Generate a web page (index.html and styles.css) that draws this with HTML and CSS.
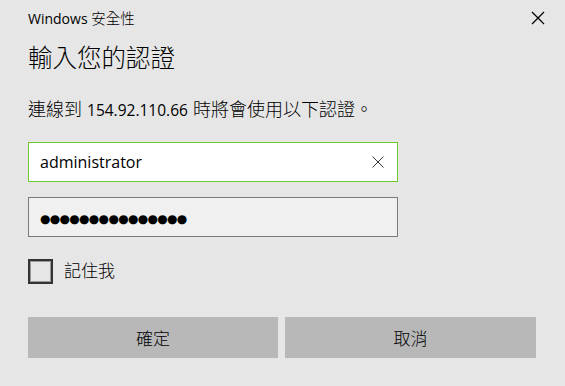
FILE: index.html
```html
<!DOCTYPE html>
<html lang="zh-Hant">
<head>
<meta charset="utf-8">
<link rel="stylesheet" href="styles.css">
</head>
<body>
<div class="dialog">
  <div class="titlebar">
    <span class="app">Windows <span class="cj-title">安全性</span></span>
    <span class="close"><svg width="14" height="14" viewBox="0 0 14 14"><path d="M1 1L13 13M13 1L1 13" stroke="#000" stroke-width="1.3" fill="none"/></svg></span>
  </div>
  <h1 class="heading">輸入您的認證</h1>
  <p class="desc"><span class="cj">連線到</span> 154.92.110.66 <span class="cj">時將會使用以下認證。</span></p>
  <div class="field field-active">
    <span class="value">administrator</span>
    <span class="clear"><svg width="12" height="12" viewBox="0 0 12 12"><path d="M0.5 0.5L11.5 11.5M11.5 0.5L0.5 11.5" stroke="#333" stroke-width="1" fill="none"/></svg></span>
  </div>
  <div class="field field-pass">
    <span class="dots">●●●●●●●●●●●●●●●</span>
  </div>
  <label class="remember">
    <span class="box"></span>
    <span class="rlabel">記住我</span>
  </label>
  <div class="buttons">
    <div class="btn btn-ok">確定</div>
    <div class="btn">取消</div>
  </div>
</div>
</body>
</html>
```
FILE: styles.css
```css
html, body {
  margin: 0;
  padding: 0;
  background: #e6e6e6;
}
body {
  font-family: "Open Sans", "Noto Sans CJK TC", sans-serif;
  color: #000;
  width: 565px;
  height: 386px;
  overflow: hidden;
}
.dialog {
  padding: 0 29px 0 28px;
}
.titlebar {
  display: flex;
  justify-content: space-between;
  align-items: center;
  height: 36px;
}
.app {
  font-size: 14px;
  margin-top: -1px;
}
.cj-title {
  font-family: "Noto Sans CJK TC", sans-serif;
  font-weight: 300;
  font-size: 14.5px;
}
.close {
  display: flex;
  margin-right: -9px;
  margin-top: -1px;
}
.heading {
  font-family: "Noto Sans CJK TC", sans-serif;
  font-weight: 300;
  font-size: 24.5px;
  line-height: 30px;
  margin: 6px 0 0 0;
}
.desc {
  font-size: 15.5px;
  line-height: 22px;
  margin: 25px 0 0 0;
  word-spacing: 1px;
}
.cj {
  font-family: "Noto Sans CJK TC", sans-serif;
  font-weight: 300;
  font-size: 18px;
}
.field {
  box-sizing: border-box;
  width: 370px;
  height: 40px;
  display: flex;
  align-items: center;
  justify-content: space-between;
  padding: 0 13px 0 11px;
}
.field-active {
  margin-top: 21px;
  background: #fff;
  border: 1px solid #6ec92c;
}
.value {
  font-size: 16px;
  margin-top: -1px;
}
.clear {
  display: flex;
}
.field-pass {
  margin-top: 15px;
  background: #f0f0f0;
  border: 1px solid #7a7a7a;
}
.dots {
  font-family: "DejaVu Sans", sans-serif;
  font-size: 12px;
  letter-spacing: -0.7px;
  margin-top: 3px;
}
.remember {
  display: flex;
  align-items: center;
  margin-top: 22px;
  height: 25px;
}
.box {
  box-sizing: border-box;
  width: 25px;
  height: 25px;
  border: 2px solid #333;
  background: #e6e6e6;
  box-shadow: inset 0 0 0 1px #9a9a9a;
}
.rlabel {
  font-family: "Noto Sans CJK TC", sans-serif;
  font-weight: 300;
  font-size: 17px;
  margin-left: 11px;
  margin-top: -4px;
}
.buttons {
  display: flex;
  gap: 7px;
  margin-top: 33px;
}
.btn {
  width: 251px;
  height: 41px;
  background: #b8b8b8;
  display: flex;
  align-items: center;
  justify-content: center;
  font-family: "Noto Sans CJK TC", sans-serif;
  font-weight: 300;
  font-size: 17px;
}
.btn-ok {
  width: 250px;
}
```
